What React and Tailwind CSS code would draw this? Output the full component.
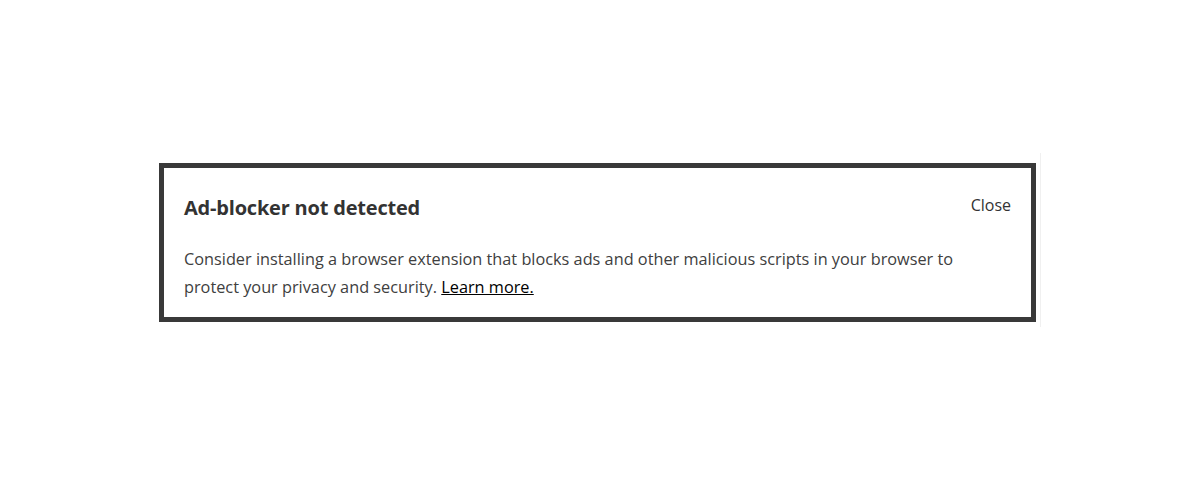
export default function App() {
  return (
    <div className="min-h-screen w-full bg-white flex items-start" style={{ fontFamily: '"Open Sans", "Noto Sans", sans-serif' }}>
      <div className="mt-[153px] ml-[159px] pt-[10px] pb-[5px] pr-[4px] border-r border-[#f0f0f0]">
        <div className="w-[877px] h-[159px] border-[5px] border-[#393939] bg-white px-5 pt-[26px]">
          <div className="flex justify-between items-start">
            <h2 className="text-[20px] leading-[28px] font-bold text-[#333] tracking-[-0.2px]">Ad-blocker not detected</h2>
            <button className="text-[16px] leading-[24px] text-[#333] mt-[-1px]">Close</button>
          </div>
          <p className="mt-[23px] text-[16.3px] leading-[28px] text-[#404040]">
            Consider installing a browser extension that blocks ads and other malicious scripts in your browser to
            protect your privacy and security.{' '}
            <a href="#" className="text-black underline">Learn more.</a>
          </p>
        </div>
      </div>
    </div>
  );
}
